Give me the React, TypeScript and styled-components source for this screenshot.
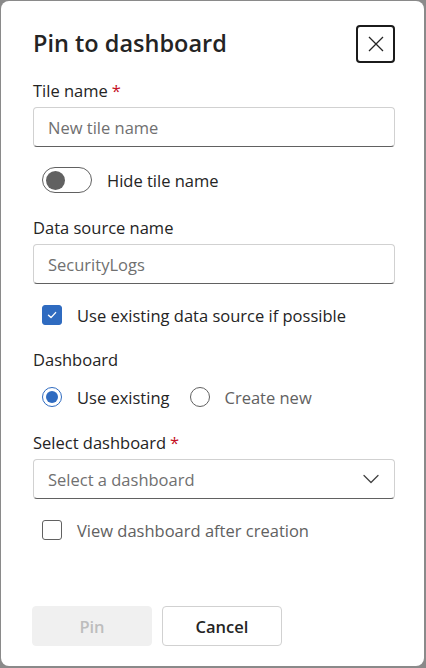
import React from "react";
import styled, { createGlobalStyle } from "styled-components";

const GlobalStyle = createGlobalStyle`
    html, body {
        margin: 0;
        padding: 0;
        background: #8a8a8a;
    }
    body {
        font-family: "Open Sans", "Noto Sans", sans-serif;
        color: #242424;
    }
`;

const Backdrop = styled.div`
    width: 426px;
    height: 668px;
    padding: 1px 2px 2px 1px;
    box-sizing: border-box;
`;

const Dialog = styled.div`
    width: 100%;
    height: 100%;
    background: #ffffff;
    border-radius: 8px;
    box-sizing: border-box;
    padding: 24px 29px 20px 32px;
    display: flex;
    flex-direction: column;
`;

const Header = styled.div`
    display: flex;
    align-items: center;
    justify-content: space-between;
    height: 38px;
`;

const Title = styled.h1`
    margin: 0 0 2px;
    font-size: 23.5px;
    font-weight: 600;
    color: #242424;
`;

const CloseButton = styled.button`
    width: 39px;
    height: 38px;
    box-sizing: border-box;
    border: 2px solid #1b1b1b;
    border-radius: 4px;
    background: #fff;
    display: flex;
    align-items: center;
    justify-content: center;
    padding: 0;
`;

const Label = styled.div<{ $top: number }>`
    margin-top: ${(p) => p.$top}px;
    height: 24px;
    line-height: 24px;
    font-size: 16.5px;
    color: #242424;
`;

const Required = styled.span`
    color: #c50f1f;
    margin-left: 4px;
`;

const TextBox = styled.div`
    margin-top: 4px;
    height: 40px;
    box-sizing: border-box;
    border: 1px solid #d1d1d1;
    border-bottom-color: #616161;
    border-radius: 4px;
    padding: 0 14px;
    display: flex;
    align-items: center;
    justify-content: space-between;
    font-size: 16.5px;
    color: #707070;
`;

const OptionRow = styled.div<{ $top: number }>`
    margin-top: ${(p) => p.$top}px;
    height: 36px;
    padding-left: 9px;
    display: flex;
    align-items: center;
    gap: 20px;
`;

const Option = styled.label`
    display: flex;
    align-items: center;
    gap: 15px;
`;

const OptionText = styled.span<{ $muted?: boolean }>`
    font-size: 16.5px;
    color: ${(p) => (p.$muted ? "#616161" : "#242424")};
`;

const SwitchTrack = styled.span`
    width: 50px;
    height: 26px;
    box-sizing: border-box;
    border: 1px solid #616161;
    border-radius: 13px;
    display: flex;
    align-items: center;
    padding-left: 3px;
`;

const SwitchKnob = styled.span`
    width: 19px;
    height: 19px;
    border-radius: 50%;
    background: #616161;
`;

const CheckBox = styled.span<{ $checked?: boolean }>`
    width: 20px;
    height: 20px;
    box-sizing: border-box;
    border-radius: 3px;
    border: 1px solid ${(p) => (p.$checked ? "#2f6bc0" : "#616161")};
    background: ${(p) => (p.$checked ? "#2f6bc0" : "#fff")};
    display: flex;
    align-items: center;
    justify-content: center;
`;

const Radio = styled.span<{ $checked?: boolean }>`
    width: 20px;
    height: 20px;
    box-sizing: border-box;
    border-radius: 50%;
    border: 1px solid ${(p) => (p.$checked ? "#2f6bc0" : "#616161")};
    display: flex;
    align-items: center;
    justify-content: center;

    &::after {
        content: "";
        display: ${(p) => (p.$checked ? "block" : "none")};
        width: 12px;
        height: 12px;
        border-radius: 50%;
        background: #2f6bc0;
    }
`;

const Footer = styled.div`
    margin-top: auto;
    margin-left: -1px;
    display: flex;
    gap: 10px;
`;

const Button = styled.button<{ $disabled?: boolean }>`
    width: 120px;
    height: 40px;
    box-sizing: border-box;
    border-radius: 4px;
    font-family: inherit;
    font-size: 16.5px;
    font-weight: 600;
    border: 1px solid ${(p) => (p.$disabled ? "#f0f0f0" : "#d1d1d1")};
    background: ${(p) => (p.$disabled ? "#f0f0f0" : "#ffffff")};
    color: ${(p) => (p.$disabled ? "#bdbdbd" : "#242424")};
`;

const DismissIcon = () => (
    <svg width="16" height="16" viewBox="0 0 16 16" fill="none">
        <path d="M1 1L15 15M15 1L1 15" stroke="#242424" strokeWidth="1.3" />
    </svg>
);

const CheckIcon = () => (
    <svg width="12" height="12" viewBox="0 0 12 12" fill="none">
        <path d="M2.5 6.2L5 8.6L9.6 3.6" stroke="#fff" strokeWidth="1.4" strokeLinecap="round" strokeLinejoin="round" />
    </svg>
);

const ChevronIcon = () => (
    <svg width="18" height="18" viewBox="0 0 18 18" fill="none">
        <path d="M2 5.5L9 12.5L16 5.5" stroke="#424242" strokeWidth="1.3" strokeLinecap="round" strokeLinejoin="round" />
    </svg>
);

export default () => {
    return (
        <Backdrop>
            <GlobalStyle />
            <Dialog>
                <Header>
                    <Title>Pin to dashboard</Title>
                    <CloseButton aria-label="Close">
                        <DismissIcon />
                    </CloseButton>
                </Header>

                <Label $top={16}>
                    Tile name<Required>*</Required>
                </Label>
                <TextBox>New tile name</TextBox>

                <OptionRow $top={15}>
                    <Option>
                        <SwitchTrack>
                            <SwitchKnob />
                        </SwitchTrack>
                        <OptionText>Hide tile name</OptionText>
                    </Option>
                </OptionRow>

                <Label $top={18}>Data source name</Label>
                <TextBox>SecurityLogs</TextBox>

                <OptionRow $top={13}>
                    <Option>
                        <CheckBox $checked>
                            <CheckIcon />
                        </CheckBox>
                        <OptionText>Use existing data source if possible</OptionText>
                    </Option>
                </OptionRow>

                <Label $top={15}>Dashboard</Label>
                <OptionRow $top={7}>
                    <Option>
                        <Radio $checked />
                        <OptionText>Use existing</OptionText>
                    </Option>
                    <Option>
                        <Radio />
                        <OptionText $muted>Create new</OptionText>
                    </Option>
                </OptionRow>

                <Label $top={16}>
                    Select dashboard<Required>*</Required>
                </Label>
                <TextBox>
                    Select a dashboard
                    <ChevronIcon />
                </TextBox>

                <OptionRow $top={13}>
                    <Option>
                        <CheckBox />
                        <OptionText $muted>View dashboard after creation</OptionText>
                    </Option>
                </OptionRow>

                <Footer>
                    <Button $disabled>Pin</Button>
                    <Button>Cancel</Button>
                </Footer>
            </Dialog>
        </Backdrop>
    );
};
